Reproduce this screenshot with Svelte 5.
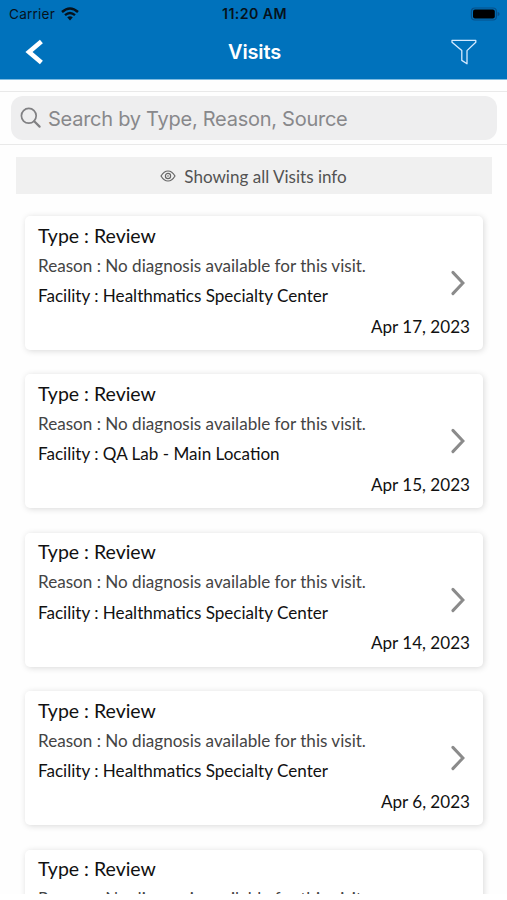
<script>
  const visits = [
    { facility: 'Healthmatics Specialty Center', date: 'Apr 17, 2023' },
    { facility: 'QA Lab - Main Location', date: 'Apr 15, 2023' },
    { facility: 'Healthmatics Specialty Center', date: 'Apr 14, 2023' },
    { facility: 'Healthmatics Specialty Center', date: 'Apr 6, 2023' },
    {}
  ];
</script>

<div class="screen">
  <header>
    <div class="status">
      <div class="carrier">
        <span>Carrier</span>
        <svg width="18" height="14" viewBox="0 0 18 14" fill="none" stroke="#06121c">
          <path d="M1 5Q9-2.1 17 5" stroke-width="2.5" />
          <path d="M4 8.2Q9 3.7 14 8.2" stroke-width="2.3" />
          <path d="M6.2 10.3Q9 8 11.8 10.3L9 13.4Z" fill="#06121c" stroke="none" />
        </svg>
      </div>
      <span class="time">11:20 AM</span>
      <svg class="battery" width="30" height="14" viewBox="0 0 30 14">
        <rect x="1.4" y="1" width="25" height="12" rx="3.5" fill="none" stroke="#07518a" stroke-width="1.2" />
        <rect x="3" y="2.6" width="21.8" height="8.8" rx="2" fill="#000" />
        <path d="M27.6 4.8q2 .7 2 2.2t-2 2.2z" fill="#07518a" />
      </svg>
    </div>
    <div class="nav">
      <svg class="back" width="20" height="26" viewBox="0 0 20 26">
        <path d="M16.4 2.6 4 13l12.4 10.4" fill="none" stroke="#fff" stroke-width="4.6" />
      </svg>
      <h1>Visits</h1>
      <svg class="filter" width="28" height="28" viewBox="0 0 28 28">
        <path d="M2 2.4H25.8V4.2L17 12.6V25.8L11.8 22.4V12.6L2 4.2Z" fill="none" stroke="#d5eaff" stroke-width="1.3" stroke-linejoin="round" />
      </svg>
    </div>
  </header>

  <div class="search-bar">
    <div class="search">
      <svg width="22" height="22" viewBox="0 0 22 22" fill="none" stroke="#808083">
        <circle cx="8.8" cy="8.8" r="7.4" stroke-width="1.7" />
        <path d="m14.2 14.2 5.4 5.4" stroke-width="2.2" stroke-linecap="round" />
      </svg>
      <span>Search by Type, Reason, Source</span>
    </div>
  </div>

  <div class="info">
    <svg width="16" height="12" viewBox="0 0 16 12" fill="none" stroke="#666">
      <path d="M1 6Q4 1 8 1t7 5q-3 5-7 5T1 6Z" stroke-width="1.2" />
      <circle cx="8" cy="6" r="2.6" stroke-width="1.2" />
      <circle cx="8" cy="6" r=".8" fill="#666" stroke="none" />
    </svg>
    <span>Showing all Visits info</span>
  </div>

  <main>
    {#each visits as visit}
      <article>
        <div class="details">
          <h2>Type : Review</h2>
          <p class="reason">Reason : No diagnosis available for this visit.</p>
          {#if visit.facility}
            <p class="facility">Facility : {visit.facility}</p>
            <time>{visit.date}</time>
          {/if}
        </div>
        <svg class="chevron" width="16" height="28" viewBox="0 0 16 28">
          <path d="M2.9 3.4 12.9 14 2.9 24.6" fill="none" stroke="#8b8b8b" stroke-width="3" stroke-linecap="round" />
        </svg>
      </article>
    {/each}
  </main>
</div>

<style>
  :global(body) { background: #fff; }
  .screen {
    width: 507px;
    height: 894px;
    overflow: hidden;
    display: flex;
    flex-direction: column;
    background: #fefefe;
    font-family: Lato, Carlito, sans-serif;
  }
  svg { display: block; flex: none; }
  header {
    height: 80px;
    flex: none;
    background: #0072bc;
    font-family: Inter, sans-serif;
    color: #06121c;
    border-bottom: 1px solid #80bce1;
    box-sizing: border-box;
  }
  .status, .nav {
    display: grid;
    grid-template-columns: 1fr auto 1fr;
    align-items: center;
  }
  .status { height: 27px; padding: 0 7px 0 9px; font-size: 13.6px; }
  .carrier { display: flex; align-items: center; gap: 6px; }
  .carrier span { letter-spacing: .2px; }
  .time { font-size: 14.2px; font-weight: 600; letter-spacing: .4px; }
  .battery, .filter { justify-self: end; }
  .nav { height: 50px; padding: 0 23px 0 25px; }
  .filter { margin-right: 6px; }
  h1 { margin: 0; font-size: 20px; font-weight: 600; letter-spacing: -.15px; color: #fff; }
  .search-bar {
    height: 54px;
    flex: none;
    margin-top: 11px;
    padding: 4px 10px 4px 11px;
    box-sizing: border-box;
    border-top: 1px solid #e9e9e9;
    border-bottom: 1px solid #e9e9e9;
  }
  .search {
    height: 44px;
    display: flex;
    align-items: center;
    gap: 6px;
    padding-left: 9px;
    border-radius: 12px;
    background: #eeeeef;
    color: #88888b;
    font: 20px Inter, sans-serif;
    letter-spacing: -.26px;
  }
  .search span { padding-top: 1px; }
  .info {
    height: 37px;
    flex: none;
    margin: 12px 15px 0 16px;
    display: flex;
    align-items: center;
    justify-content: center;
    gap: 8px;
    background: #f0f0f0;
    color: #535353;
    font-size: 17.06px;
  }
  .info svg { margin-left: -1px; }
  .info span { padding-top: 1px; }
  main {
    display: flex;
    flex-direction: column;
    gap: 24.4px;
    padding: 22px 24px 0 25px;
  }
  article {
    height: 134px;
    flex: none;
    display: flex;
    align-items: center;
    padding: 0 13px;
    box-sizing: border-box;
    border-radius: 5px;
    background: #fff;
    box-shadow: 1px 1px 6px rgba(0, 0, 0, .15);
  }
  .details {
    width: 432px;
    flex: none;
    align-self: flex-start;
    padding-top: 3.6px;
    display: flex;
    flex-direction: column;
  }
  .chevron { margin-left: -20px; }
  h2, p { margin: 0; font-weight: 400; }
  h2 { font-size: 19.5px; line-height: 31px; color: #111; }
  .reason, .facility, time { font-size: 17.08px; line-height: 30.5px; color: #111; }
  .reason { color: #444; }
  time { align-self: flex-end; }
</style>
